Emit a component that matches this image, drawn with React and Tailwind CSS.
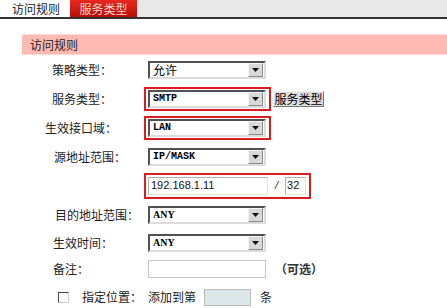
import { Fragment } from 'react'

const cjk = "font-['SimSun','Noto_Sans_CJK_SC',sans-serif]"

function Arrow() {
  return (
    <span className="mr-[1px] flex h-[14px] w-[15px] items-center justify-center border border-t-[#f4f4f4] border-l-[#f4f4f4] border-b-[#8a8a8a] border-r-[#8a8a8a] bg-[#d8d8d8]">
      <svg width="7" height="4" viewBox="0 0 7 4">
        <path d="M0 0h7L3.5 4z" fill="#111" />
      </svg>
    </span>
  )
}

function Select({ value, cn = '' }) {
  return (
    <div className="flex h-[18px] w-[118px] items-center border-2 border-t-[#505050] border-l-[#505050] border-b-[#dcdcdc] border-r-[#dcdcdc] bg-white">
      <span className={`flex-1 pl-[3px] text-[10px] leading-none text-black ${cn}`}>{value}</span>
      <Arrow />
    </div>
  )
}

function Label({ children, shift = 'pl-[52px]' }) {
  return <div className={`w-[148px] ${shift} text-[12px] text-[#222]`}>{children}</div>
}

function RedBox({ children }) {
  return <div className="-ml-[4px] flex items-center border-2 border-[#dc1c1c] py-[1px] pl-[2px] pr-[3px]">{children}</div>
}

export default function App() {
  return (
    <div className={`h-[308px] w-[447px] overflow-hidden bg-white ${cjk}`}>
      <div className="flex h-[19px] border-b-2 border-[#333] bg-[#e8e8e8]">
        <div className="flex w-[70px] items-center bg-white pl-[12px] text-[12px] text-[#222]">访问规则</div>
        <div className="flex w-[67px] items-center justify-center bg-gradient-to-b from-[#e8281e] to-[#b80c08] text-[12px] text-[#ffd8d0]">
          服务类型
        </div>
      </div>

      <div className="ml-[22px] mt-[15px] flex h-[21px] items-center border-y border-[#ffd8d4] bg-[#ffbab3] pl-[8px] text-[12px] text-[#222]">
        访问规则
      </div>

      <div className="flex flex-col">
        <div className="flex h-[30px] items-center">
          <Label>策略类型：</Label>
          <Select value="允许" cn="text-[12px]" />
        </div>
        <div className="flex h-[28px] items-center">
          <Label>服务类型：</Label>
          <RedBox>
            <Select value="SMTP" cn="font-['Liberation_Mono'] font-bold" />
          </RedBox>
          <button className="ml-[2px] h-[16px] w-[51px] border border-t-[#f4f4f4] border-l-[#f4f4f4] border-b-[#777] border-r-[#777] bg-[#dedede] text-[12px] leading-none text-black">
            服务类型
          </button>
        </div>
        <div className="flex h-[30px] items-center">
          <Label shift="pl-[45px]">生效接口域：</Label>
          <RedBox>
            <Select value="LAN" cn="font-['Liberation_Mono'] font-bold" />
          </RedBox>
        </div>
        <div className="flex h-[27px] items-center">
          <Label shift="pl-[54px]">源地址范围：</Label>
          <Select value="IP/MASK" cn="font-['Liberation_Mono'] font-bold" />
        </div>
        <div className="flex h-[31px] items-center">
          <Label> </Label>
          <RedBox>
            <div className="flex items-center py-[1px]">
              <div className="flex h-[18px] w-[120px] items-center border border-[#b0b0b0] border-b-[#e4e4e4] border-r-[#e4e4e4] bg-white pl-[2px] font-['Liberation_Sans'] text-[11px] text-[#111]">
                192.168.1.11
              </div>
              <span className="mx-[7px] font-['Liberation_Sans'] text-[11px] italic text-[#222]">/</span>
              <div className="flex h-[18px] w-[21px] items-center border border-[#b0b0b0] border-b-[#e4e4e4] border-r-[#e4e4e4] bg-white pl-[1px] font-['Liberation_Sans'] text-[11px] text-[#111]">
                32
              </div>
            </div>
          </RedBox>
        </div>
        <div className="flex h-[27px] items-center">
          <Label shift="pl-[55px]">目的地址范围：</Label>
          <Select value="ANY" cn="font-['Liberation_Serif'] font-bold" />
        </div>
        <div className="flex h-[30px] items-center">
          <Label shift="pl-[53px]">生效时间：</Label>
          <Select value="ANY" cn="font-['Liberation_Serif'] font-bold" />
        </div>
        <div className="flex h-[22px] items-center">
          <Label shift="pl-[53px]">备注：</Label>
          <div className="h-[18px] w-[118px] border border-[#c8c8c8] bg-white" />
          <span className="ml-[9px] text-[12px] font-bold text-[#333]">（可选）</span>
        </div>
        <div className="flex h-[34px] items-center">
          <div className="flex w-[148px] items-center pl-[58px]">
            <span className="h-[11px] w-[11px] border border-t-[#444] border-l-[#444] border-b-[#ccc] border-r-[#ccc] bg-white" />
            <span className="ml-[13px] text-[12px] text-[#222]">指定位置：</span>
          </div>
          <span className="text-[12px] text-[#222]">添加到第</span>
          <div className="ml-[8px] h-[17px] w-[47px] border border-[#bcbcbc] bg-[#dde6e9]" />
          <span className="ml-[9px] text-[12px] text-[#222]">条</span>
        </div>
      </div>
    </div>
  )
}
